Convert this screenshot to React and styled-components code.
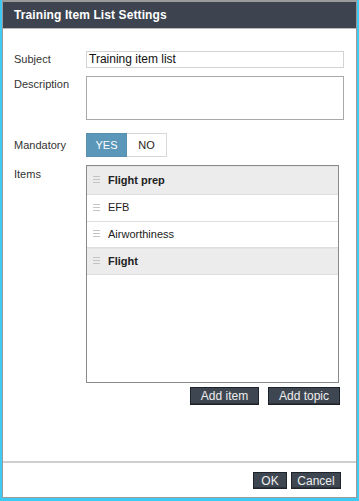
import React from 'react';
import styled, { createGlobalStyle, css } from 'styled-components';

const Global = createGlobalStyle`
  html, body {
    margin: 0;
    padding: 0;
    background: #3fcaf3;
    font-family: "Liberation Sans", Arial, sans-serif;
  }
`;

const Dialog = styled.div`
  box-sizing: border-box;
  width: 355px;
  height: 498px;
  margin-left: 2px;
  background: #fff;
  border: 1px solid #9b9b9b;
  border-top-width: 2px;
  display: flex;
  flex-direction: column;
`;

const Header = styled.div`
  height: 26px;
  flex: none;
  background: #3d4450;
  border-bottom: 1px solid #b9b9b9;
  color: #fff;
  font-weight: bold;
  font-size: 12px;
  letter-spacing: 0.1px;
  display: flex;
  align-items: center;
  padding-left: 11px;
`;

const Body = styled.div`
  flex: 1;
  padding: 22px 12px 0 11px;
`;

const Row = styled.div`
  display: flex;
  align-items: flex-start;
  margin-bottom: ${p => p.gap || 0}px;
`;

const Label = styled.div`
  width: 72px;
  flex: none;
  font-size: 11px;
  color: #333;
  padding-top: ${p => p.top || 0}px;
`;

const TextInput = styled.div`
  box-sizing: border-box;
  flex: 1;
  height: 17px;
  border: 1px solid #d3d3d3;
  font-size: 12px;
  color: #111;
  padding: 0 2px;
  line-height: 15px;
`;

const TextArea = styled.div`
  box-sizing: border-box;
  flex: 1;
  height: 44px;
  border: 1px solid #a9a9a9;
`;

const Toggle = styled.div`
  display: flex;
  height: 24px;
`;

const ToggleBtn = styled.div`
  box-sizing: border-box;
  width: ${p => p.w}px;
  display: flex;
  align-items: center;
  justify-content: center;
  font-size: 11px;
  border: 1px solid #d8d8d8;
  ${p => p.active
    ? css`background: #5b97b9; color: #fff; border-color: #5b8fae;`
    : css`background: #fff; color: #222; border-left: none;`}
`;

const ItemsCol = styled.div`
  width: 253px;
  display: flex;
  flex-direction: column;
  align-items: flex-end;
`;

const List = styled.div`
  box-sizing: border-box;
  width: 100%;
  height: 218px;
  border: 1px solid #8a8a8a;
`;

const Item = styled.div`
  box-sizing: border-box;
  height: ${p => p.h}px;
  display: flex;
  align-items: center;
  padding: 0 0 2px 6px;
  border-bottom: 1px solid #dedede;
  font-size: 11px;
  font-weight: ${p => p.topic ? 'bold' : 'normal'};
  color: #222;
  background: ${p => p.topic ? '#ececec' : '#fff'};
  border-top: ${p => p.topic ? '1px solid #e4e4e4' : 'none'};
`;

const Handle = styled.svg`
  width: 7px;
  height: 7px;
  margin-right: 8px;
  flex: none;
`;

const Actions = styled.div`
  display: flex;
  gap: 9px;
  margin-top: 4px;
  margin-right: -1px;
`;

const Button = styled.button`
  box-sizing: border-box;
  height: ${p => p.h || 18}px;
  width: ${p => p.w}px;
  padding: 0;
  background: #3e4651;
  border: 1px solid #1e2329;
  box-shadow: inset 0 -1px 0 #2c323a;
  color: #eee;
  font-family: inherit;
  font-size: 12px;
`;

const Footer = styled.div`
  box-sizing: border-box;
  flex: none;
  height: 36px;
  border-top: 2px solid #cfcfcf;
  display: flex;
  justify-content: flex-end;
  align-items: flex-start;
  gap: 4px;
  padding: 9px 15px 0 0;
`;

const DragIcon = () => (
  <Handle viewBox="0 0 7 7">
    <rect x="0" y="0" width="7" height="1" fill="#c4c4c4" />
    <rect x="0" y="3" width="7" height="1" fill="#c4c4c4" />
    <rect x="0" y="6" width="7" height="1" fill="#c4c4c4" />
  </Handle>
);

const items = [
  { name: 'Flight prep', topic: true, h: 29 },
  { name: 'EFB', h: 27 },
  { name: 'Airworthiness', h: 26 },
  { name: 'Flight', topic: true, h: 27 },
];

export default function App() {
  return (
    <>
      <Global />
      <Dialog>
        <Header>Training Item List Settings</Header>
        <Body>
          <Row gap={8}>
            <Label top={2}>Subject</Label>
            <TextInput>Training item list</TextInput>
          </Row>
          <Row gap={13}>
            <Label top={2}>Description</Label>
            <TextArea />
          </Row>
          <Row gap={8}>
            <Label top={6}>Mandatory</Label>
            <Toggle>
              <ToggleBtn active w={41}>YES</ToggleBtn>
              <ToggleBtn w={40}>NO</ToggleBtn>
            </Toggle>
          </Row>
          <Row>
            <Label top={3}>Items</Label>
            <ItemsCol>
              <List>
                {items.map(it => (
                  <Item key={it.name} topic={it.topic} h={it.h}>
                    <DragIcon />
                    {it.name}
                  </Item>
                ))}
              </List>
              <Actions>
                <Button w={69}>Add item</Button>
                <Button w={72}>Add topic</Button>
              </Actions>
            </ItemsCol>
          </Row>
        </Body>
        <Footer>
          <Button w={34} h={17}>OK</Button>
          <Button w={50} h={17}>Cancel</Button>
        </Footer>
      </Dialog>
    </>
  );
}
